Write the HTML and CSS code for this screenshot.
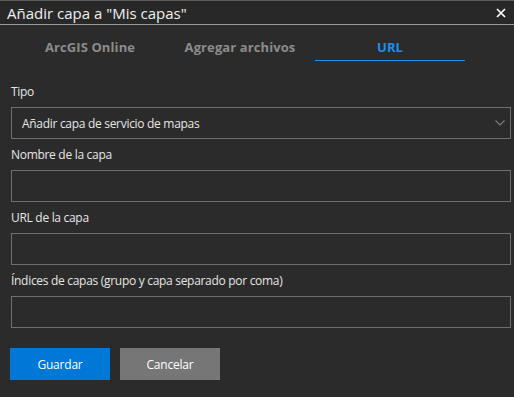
FILE: index.html
```html
<!DOCTYPE html>
<html lang="es">
<head>
    <meta charset="UTF-8">
    <title>Añadir capa</title>
    <link rel="stylesheet" href="styles.css">
</head>
<body>
    <div class="dialog">
        <div class="titlebar">
            <span class="title">Añadir capa a "Mis capas"</span>
            <svg class="close" width="10" height="10" viewBox="0 0 10 10">
                <path d="M1 1 L9 9 M9 1 L1 9" stroke="#ffffff" stroke-width="1.7"/>
            </svg>
        </div>

        <div class="tabs">
            <div class="tab">ArcGIS Online</div>
            <div class="tab">Agregar archivos</div>
            <div class="tab active">URL</div>
        </div>

        <div class="form">
            <label class="field-label">Tipo</label>
            <div class="select">
                <span>Añadir capa de servicio de mapas</span>
                <svg class="chevron" width="10" height="6" viewBox="0 0 10 6">
                    <path d="M0.5 0.5 L5 5 L9.5 0.5" fill="none" stroke="#7a7a7a" stroke-width="1.2"/>
                </svg>
            </div>

            <label class="field-label">Nombre de la capa</label>
            <div class="input"></div>

            <label class="field-label">URL de la capa</label>
            <div class="input"></div>

            <label class="field-label">Índices de capas (grupo y capa separado por coma)</label>
            <div class="input"></div>

            <div class="buttons">
                <button class="btn btn-primary">Guardar</button>
                <button class="btn btn-secondary">Cancelar</button>
            </div>
        </div>
    </div>
</body>
</html>
```

FILE: styles.css
```css
body {
    margin: 0;
    background-color: #2b2b2b;
    font-family: "Open Sans", "Noto Sans", sans-serif;
    color: #e6e6e6;
}
.dialog {
    width: 514px;
    height: 397px;
    border-top: 1px solid #5c5c5c;
    box-sizing: border-box;
}
.titlebar {
    height: 23px;
    background-color: #282828;
    border-bottom: 1px solid #9a9a9a;
    display: flex;
    align-items: center;
    justify-content: space-between;
    padding: 0 8px 0 7px;
}
.title {
    font-size: 15px;
    color: #f0f0f0;
}
.close {
    display: block;
}
.tabs {
    display: flex;
    padding: 13px 0 0 15px;
}
.tab {
    width: 150px;
    height: 22px;
    text-align: center;
    font-size: 13px;
    font-weight: bold;
    letter-spacing: 0.1px;
    color: #8c8c8c;
    border-bottom: 1px solid transparent;
}
.tab.active {
    color: #1f8fec;
    border-bottom-color: #1f8fec;
}
.form {
    padding: 23px 3px 0 11px;
    display: flex;
    flex-direction: column;
}
.field-label {
    font-size: 12px;
    line-height: 16px;
    letter-spacing: -0.3px;
    margin-bottom: 7px;
    color: #e6e6e6;
}
.select, .input {
    height: 30px;
    border: 1px solid #6e6e6e;
    margin-bottom: 8px;
}
.select {
    display: flex;
    align-items: center;
    justify-content: space-between;
    padding: 0 5px 0 10px;
    font-size: 12px;
    letter-spacing: -0.3px;
}
.buttons {
    display: flex;
    gap: 10px;
    margin: 12px 0 0 -1px;
}
.btn {
    width: 100px;
    height: 32px;
    border: none;
    font-family: inherit;
    font-size: 12px;
    letter-spacing: -0.2px;
    color: #ffffff;
}
.btn-primary {
    background-color: #0078d7;
}
.btn-secondary {
    background-color: #767676;
}
```
